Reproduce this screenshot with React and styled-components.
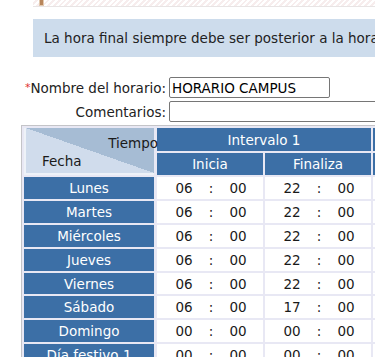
import React from "react";
import styled, { createGlobalStyle } from "styled-components";

const Global = createGlobalStyle`
  html, body { margin: 0; padding: 0; overflow: hidden; background: #fff; }
  body { font-family: "DejaVu Sans", Verdana, sans-serif; font-size: 13.5px; color: #1e1e1e; }
`;

const Page = styled.div`
  width: 375px;
  height: 357px;
  overflow: hidden;
`;

const TopStrip = styled.div`
  margin-left: 33px;
  height: 6px;
  border-bottom: 1px solid #e8e4e4;
  background: repeating-linear-gradient(135deg, #ffffff 0 2px, #f7eded 2px 4px);
  position: relative;
`;

const Handle = styled.span`
  position: absolute;
  left: 6px;
  top: 0;
  width: 3px;
  height: 5px;
  background: #b8865b;
  border: 1px solid #e2c9b0;
  border-top: none;
`;

const Notice = styled.div`
  margin: 12px 0 0 33px;
  height: 38px;
  background: #cddcec;
  display: flex;
  align-items: center;
  padding-left: 11px;
  white-space: nowrap;
  overflow: hidden;
  color: #222;
`;

const Form = styled.div`
  margin-top: 20px;
  display: grid;
  grid-template-columns: 166px auto;
  column-gap: 3px;
  row-gap: 3px;
  align-items: center;
`;

const Label = styled.label`
  text-align: right;
  white-space: nowrap;
  color: #222;
`;

const Req = styled.span`
  color: #e03030;
  font-size: 11px;
  vertical-align: 2px;
`;

const TextInput = styled.input`
  box-sizing: border-box;
  width: ${(p) => p.$w}px;
  height: 21px;
  border: 1px solid #767676;
  border-radius: 2px;
  padding: 0 2px;
  font: inherit;
  font-size: 13.5px;
  color: #000;
  background: #fff;
  outline: none;
`;

const TableWrap = styled.div`
  margin: 3px 0 0 21px;
  width: max-content;
  border: 1px solid #c4c4c8;
  padding: 2px;
  background: #e8e8f4;
`;

const Grid = styled.div`
  display: grid;
  grid-template-columns: 131px 106px 106px 106px 106px;
  grid-template-rows: 23px 22px repeat(8, 21.9px);
  gap: 2px;
`;

const Corner = styled.div`
  grid-row: 1 / span 2;
  box-sizing: border-box;
  margin-right: 1px;
  border-left: 2px solid #eef2f8;
  border-bottom: 2px solid #eef2f8;
  background: linear-gradient(to bottom left, #a6bcd4 50%, #d0dcec 50%);
  display: flex;
  flex-direction: column;
  color: #1a1a1a;
  overflow: visible;
  position: relative;
`;

const CornerTop = styled.span`
  align-self: flex-end;
  margin-right: -4px;
  margin-top: 8px;
  line-height: 14px;
`;

const CornerBottom = styled.span`
  margin-left: 16px;
  margin-top: 4px;
  line-height: 14px;
`;

const HeadCell = styled.div`
  grid-column: span ${(p) => p.$span || 1};
  background: #3c6fa6;
  color: #fff;
  display: flex;
  align-items: center;
  justify-content: center;
  white-space: nowrap;
`;

const DayCell = styled.div`
  margin-right: 1px;
  background: #3c6fa6;
  color: #fff;
  display: flex;
  align-items: center;
  justify-content: center;
  white-space: nowrap;
  overflow: hidden;
`;

const TimeCell = styled.div`
  background: #fff;
  display: grid;
  grid-template-columns: 30px 24px 30px;
  padding-left: 12px;
  align-items: center;
  color: #1a1a1a;
`;

const Part = styled.span`
  text-align: center;
`;

const rows = [
  ["Lunes", "06", "00", "22", "00"],
  ["Martes", "06", "00", "22", "00"],
  ["Miércoles", "06", "00", "22", "00"],
  ["Jueves", "06", "00", "22", "00"],
  ["Viernes", "06", "00", "22", "00"],
  ["Sábado", "06", "00", "17", "00"],
  ["Domingo", "00", "00", "00", "00"],
  ["Día festivo 1", "00", "00", "00", "00"],
];

function Time({ h, m }) {
  return (
    <TimeCell>
      <Part>{h}</Part>
      <Part>:</Part>
      <Part>{m}</Part>
    </TimeCell>
  );
}

export default function App() {
  return (
    <Page>
      <Global />
      <TopStrip>
        <Handle />
      </TopStrip>
      <Notice>La hora final siempre debe ser posterior a la hora inicial.</Notice>
      <Form>
        <Label>
          <Req>*</Req>Nombre del horario:
        </Label>
        <TextInput $w={161} defaultValue="HORARIO CAMPUS" />
        <Label>Comentarios:</Label>
        <TextInput $w={260} defaultValue="" />
      </Form>
      <TableWrap>
        <Grid>
          <Corner>
            <CornerTop>Tiempo</CornerTop>
            <CornerBottom>Fecha</CornerBottom>
          </Corner>
          <HeadCell $span={2}>Intervalo 1</HeadCell>
          <HeadCell $span={2}>Intervalo 2</HeadCell>
          <HeadCell>Inicia</HeadCell>
          <HeadCell>Finaliza</HeadCell>
          <HeadCell>Inicia</HeadCell>
          <HeadCell>Finaliza</HeadCell>
          {rows.map(([day, h1, m1, h2, m2]) => (
            <React.Fragment key={day}>
              <DayCell>{day}</DayCell>
              <Time h={h1} m={m1} />
              <Time h={h2} m={m2} />
              <Time h="00" m="00" />
              <Time h="00" m="00" />
            </React.Fragment>
          ))}
        </Grid>
      </TableWrap>
    </Page>
  );
}
